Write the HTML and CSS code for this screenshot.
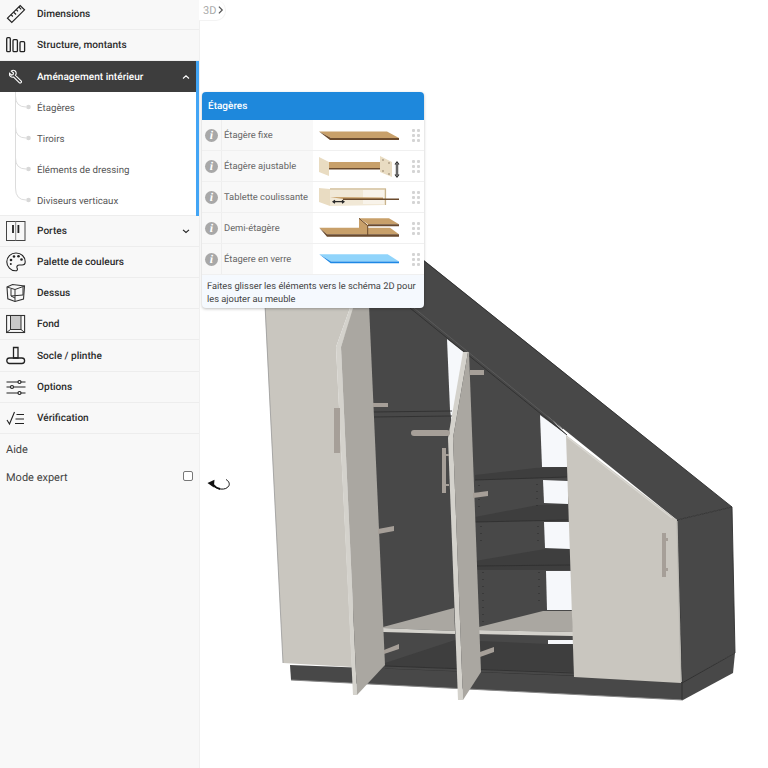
FILE: index.html
```html
<!DOCTYPE html>
<html lang="fr">
<head>
<meta charset="utf-8">
<title>Aménagement intérieur</title>
<link rel="stylesheet" href="styles.css">
</head>
<body>
<div class="app">
  <nav class="sidebar">
    <a class="row row-first"><svg class="ico" viewBox="0 0 20 20"><g fill="none" stroke="#222" stroke-width="1.2"><path d="M1.5 14.2 14.2 1.500 18.500 5.800 5.800 18.500Z"/><path d="M5 10.700l1.800 1.800M7.600 8.100l2.400 2.400M10.200 5.500l1.800 1.800M12.800 2.900l2.400 2.400"/></g></svg><span class="label">Dimensions</span></a>
    <a class="row"><svg class="ico" viewBox="0 0 20 20"><g fill="none" stroke="#222" stroke-width="1.300"><rect x="0.700" y="2.700" width="3.600" height="14" rx="1"/><rect x="7" y="4.700" width="4.400" height="12" rx="1"/><rect x="14" y="6.700" width="4.600" height="10" rx="1"/></g></svg><span class="label">Structure, montants</span></a>
    <div class="section">
      <a class="row row-active"><svg class="ico ico-wrench" viewBox="0 0 20 20"><path d="M7.800 2.300A4.200 4.200 0 0 0 3 2.800l3 2.600-.6 2-2.100.6-2.600-2.400a4.300 4.300 0 0 0 5.500 5.200l7.400 7.400a1.700 1.700 0 0 0 2.500-2.500L8.600 8.400A4.200 4.200 0 0 0 7.800 2.300Z" fill="none" stroke="#fff" stroke-width="1.500"/></svg><span class="label">Aménagement intérieur</span><svg class="chev" viewBox="0 0 8 8"><path d="M1 5.500 4 2.800l3 2.700" fill="none" stroke="#fff" stroke-width="1.100"/></svg></a>
      <div class="subnav">
        <svg class="tree" viewBox="0 0 32 124"><g fill="none" stroke="#dcdcdc"><path d="M15.500 0V96Q15.500 108 26 108M15.500 4Q15.500 15 26 15M15.500 35Q15.500 46 26 46M15.500 66Q15.500 77 26 77"/></g><g fill="#d8d8d8"><circle cx="28.500" cy="15" r="2.300"/><circle cx="28.500" cy="46" r="2.300"/><circle cx="28.500" cy="77" r="2.300"/><circle cx="28.500" cy="108" r="2.300"/></g></svg>
        <a class="sub">Étagères</a>
        <a class="sub">Tiroirs</a>
        <a class="sub">Éléments de dressing</a>
        <a class="sub">Diviseurs verticaux</a>
      </div>
    </div>
    <a class="row"><svg class="ico" viewBox="0 0 20 20"><g fill="none" stroke="#222"><rect x="0.500" y="0.500" width="18.500" height="19" stroke="#444"/><path d="M9.700.5v19" stroke="#888"/><path d="M7 4v8M12.400 4v8" stroke-width="1.800"/></g></svg><span class="label">Portes</span><svg class="chev" viewBox="0 0 8 8"><path d="M1 2.800 4 5.500l3-2.700" fill="none" stroke="#222" stroke-width="1.100"/></svg></a>
    <a class="row"><svg class="ico" viewBox="0 0 20 20"><path d="M10 1C4.800 1 .8 4.800.8 9.800c0 4.800 4 9 8.600 9 2 0 2.400-1.400 1.700-2.800-.7-1.600.4-3 2.100-3h2.800c2 0 3.200-1.400 3.200-3.300C19.200 4.800 15.200 1 10 1Z" fill="none" stroke="#222" stroke-width="1.100"/><g fill="#222"><circle cx="5" cy="8" r="1.300"/><circle cx="8" cy="4.500" r="1.300"/><circle cx="12.500" cy="4.300" r="1.300"/><circle cx="15.500" cy="7.500" r="1.300"/><circle cx="4.800" cy="12" r="1"/></g></svg><span class="label">Palette de couleurs</span></a>
    <a class="row"><svg class="ico" viewBox="0 0 20 20"><g fill="none" stroke="#333"><path d="M1 4 6.500 1.500 18.500 3 17.500 16 9 18.500 1.800 15.800Z" stroke-width="1.100"/><path d="M1 4 9 6.500 18.500 3M9 6.500V18.500M5 6v7l4 2M5 13l12-1V4"/></g></svg><span class="label">Dessus</span></a>
    <a class="row"><svg class="ico" viewBox="0 0 20 20"><g fill="none" stroke="#333"><rect x="0.600" y="1.500" width="18" height="17" stroke-width="1.100"/><rect x="4.500" y="1.500" width="10.500" height="14" fill="#c8c8c8"/><path d="M.6 18.500 4.500 15.500M18.600 18.500 15 15.500"/></g></svg><span class="label">Fond</span></a>
    <a class="row row-tall"><svg class="ico" viewBox="0 0 20 20"><g fill="none" stroke="#222" stroke-width="1.300"><path d="M7.500 1.500h4.500v10.500H7.500Z"/><rect x="0.800" y="12" width="17.800" height="5.500" rx="2.700"/></g></svg><span class="label">Socle / plinthe</span></a>
    <a class="row"><svg class="ico" viewBox="0 0 20 20"><g fill="none" stroke="#222" stroke-width="1.200"><path d="M.5 5h11.500M15 5h4.500M.5 10h4M8 10h11.500M.5 16h11.500M15 16h4.500"/><circle cx="13.500" cy="5" r="1.500"/><circle cx="6" cy="10" r="1.500"/><circle cx="13.500" cy="16" r="1.500"/></g></svg><span class="label">Options</span></a>
    <a class="row"><svg class="ico" viewBox="0 0 20 20"><g fill="none" stroke="#222" stroke-width="1.100"><path d="M1 12 3.500 16 8.500 4"/><path d="M10.500 6.500H18M9.500 11H18M9 15.500H18"/></g></svg><span class="label">Vérification</span></a>
    <div class="plain plain-help">Aide</div>
    <div class="plain plain-expert"><span>Mode expert</span><span class="check"></span></div>
  </nav>

  <main class="stage">
    <svg class="scene" viewBox="199 0 569 768">
      <polygon class="f-dark" points="360,290 420,290 567,435 575,680 370,684 352,668"/>
      <polygon class="f-gap" points="447,339 466,354 452,425 450,410"/>
      <polygon class="f-gap" points="540,415 567,435 567,467 542,467"/>
      <polygon class="f-gap" points="543,480 568,481 568,504 544,503"/>
      <polygon class="f-gap" points="544,522 570,522 570,549 545,548"/>
      <polygon class="f-gap" points="546,571 572,571 572,610 547,610"/>
      <polygon class="f-gap" points="548,640 574,640 574,644 548,644"/>
      <polygon class="f-shade" points="475,475 535,468 567,467 567,477 475,480"/>
      <polygon class="f-shade" points="475,517 538,505 568,504 568,520 475,522"/>
      <polygon class="f-shade" points="475,561 545,549 570,549 570,570 475,570"/>
      <polygon class="f-shade" points="385,663 455,640 548,644 574,644 574,672 385,666"/>
      <path class="f-line" d="M373 412 452 411M373 417 452 416M475 480 567 477M475 522 568 520M475 566 570 565M385 666 574 673M385 669 574 676"/>
      <path class="f-peg" d="M479 485V508M537 484V506M481 526V545M538 526V545M483 572V622M539 572V604"/>
      <polygon class="f-door-open" points="383,627 454,608 455,631 383,628"/>
      <polygon class="f-door-open" points="475,628 543,611 572,611 573,632 475,630"/>
      <polygon class="f-strip" points="383,628 455,631 455,634 383,632"/>
      <polygon class="f-strip" points="475,630 573,632 573,636 475,634"/>
      <polygon class="f-dark" points="290,665 574,676 683,682 683,700 291,680"/>
      <path class="f-edge" d="M291 680 683 700"/>
      <polygon class="f-dark" points="400,241 732,507 677,520 400,298"/>
      <path class="f-line" d="M410 308 567 435M423 260 732 507"/>
      <path class="f-fine" d="M414 308 563 429"/>
      <polygon class="f-dark" points="677,520 732,507 735,653 682,683"/>
      <polygon class="f-dark" points="682,682 735,653 733,673 683,700"/>
      <path class="f-line" d="M677 520 732 507 735 653 682 683 677 520M682 683V700"/>
      <polygon class="f-front" points="264,290 345,290 350,308 336,347 352,667 283,663"/>
      <path class="f-fine-light" d="M265 305 283 663"/>
      <polygon class="f-strip" points="336,347 341,347 357,695 353,695"/>
      <polygon class="f-strip" points="336,347 350,308 354,308 341,347"/>
      <polygon class="f-door-open" points="341,347 354,305 369,305 385,665 357,695"/>
      <polygon class="f-strip" points="448,438 453,438 463,700 458,700"/>
      <polygon class="f-strip" points="448,438 463,352 468,352 453,438"/>
      <polygon class="f-door-open" points="453,438 468,352 469,352 481,672 463,700"/>
      <polygon class="f-front" points="566,435 677,520 681,683 574,677"/>
      <path class="f-light" d="M567 437 672 518"/>
      <path class="f-strip-line" d="M677 521 681 682"/>
      <g class="f-handle">
        <rect x="334" y="408" width="6" height="45"/>
        <polygon points="373,403 388,403 388,407 373,407"/>
        <polygon points="378,529 394,526 394,531 378,534"/>
        <polygon points="384,650 399,644 399,649 384,654"/>
        <rect x="411" y="430" width="39" height="6" rx="3"/>
        <rect x="442" y="448" width="4" height="45"/>
        <rect x="446" y="454" width="3" height="2"/>
        <rect x="446" y="484" width="3" height="2"/>
        <polygon points="470,370 484,370 484,375 470,375"/>
        <polygon points="473,493 488,491 488,496 473,498"/>
        <polygon points="480,652 494,647 494,652 480,657"/>
        <rect x="662" y="533" width="4" height="44"/>
        <rect x="666" y="538" width="2" height="3"/>
        <rect x="666" y="568" width="2" height="3"/>
      </g>
    </svg>

    <div class="chip"><span>3D</span><svg class="chip-arrow" viewBox="0 0 8 10"><path d="M2 1.500 5.500 5 2 8.500" fill="none" stroke="#555" stroke-width="1.300"/></svg></div>

    <svg class="rotate" viewBox="0 0 24 14"><path d="M6 7.500C9 11 19 13.500 22 7.500 23 5 21 2.500 19 1.500" fill="none" stroke="#111" stroke-width="1"/><path d="M6 6.500C8 9 10 10.300 13 11" fill="none" stroke="#111" stroke-width="1.800"/><path d="M.5 5 7.500 1.800 6.800 9.500Z" fill="#111"/></svg>

    <section class="panel">
      <header class="panel-head">Étagères</header>
      <div class="item">
        <span class="info">i</span><span class="item-name">Étagère fixe</span>
        <span class="thumb"><svg class="thumb-svg" viewBox="0 0 95 30"><polygon class="w-top" points="6,11.500 74,11.500 86,18 18,18"/><polygon class="w-edge" points="6,11.500 18,18 86,18 86,20 17,20"/></svg></span>
        <span class="grip"><i></i><i></i><i></i><i></i><i></i><i></i></span>
      </div>
      <div class="item">
        <span class="info">i</span><span class="item-name">Étagère ajustable</span>
        <span class="thumb"><svg class="thumb-svg" viewBox="0 0 95 30"><polygon class="w-pale" points="6,6 16,11 16,25 6,21"/><polygon class="w-top" points="16,11 67,11 78,17 16,17"/><polygon class="w-edge" points="16,17 78,17 78,18.500 16,18.500"/><polygon class="w-pale" points="67,5 79,11 79,26 67,21"/><g class="w-holes"><circle cx="70" cy="9" r=".8"/><circle cx="76" cy="12" r=".8"/><circle cx="70" cy="20" r=".8"/><circle cx="76" cy="23" r=".8"/></g><path class="w-shaft" d="M84 12.500V24.500"/><path class="w-arrow" d="M82 13.500l2-2.500 2 2.500M82 23.500l2 2.500 2-2.500"/></svg></span>
        <span class="grip"><i></i><i></i><i></i><i></i><i></i><i></i></span>
      </div>
      <div class="item">
        <span class="info">i</span><span class="item-name">Tablette coulissante</span>
        <span class="thumb"><svg class="thumb-svg" viewBox="0 0 95 30"><polygon class="w-pale3" points="17,6 73,6 73,23 17,24"/><rect class="w-pale4" x="50" y="8" width="21" height="14"/><path class="w-frame" d="M17 7H72.500V23"/><polygon class="w-pale" points="6,6 17,7 17,24 6,20"/><polygon class="w-top" points="17,15 70,15.500 70,17 30,17"/><polygon class="w-edge" points="30,16.500 86,16.500 86,18 30,18"/><path class="w-arrow" d="M20 19.700H31M22 18.200l-2 1.500 2 1.500M29 18.200l2 1.500-2 1.500"/></svg></span>
        <span class="grip"><i></i><i></i><i></i><i></i><i></i><i></i></span>
      </div>
      <div class="item">
        <span class="info">i</span><span class="item-name">Demi-étagère</span>
        <span class="thumb"><svg class="thumb-svg" viewBox="0 0 95 30"><polygon class="w-top" points="46,5.300 76,5.300 86,11.300 55,11.300"/><polygon class="w-edge" points="55,11.300 86,11.300 86,13.300 55,13.300"/><polygon class="w-top" points="46,5.300 55,12 55,21.300 14,21.300 6.300,14.700 46,14.700"/><polygon class="w-top" points="55,14.700 77,14.700 86,21.300 55,21.300"/><polygon class="w-edge" points="6.300,14.700 14,21.300 86,21.300 86,23.700 14,23.700"/><path class="w-crease" d="M46 5.300 54.700 12.700V22"/></svg></span>
        <span class="grip"><i></i><i></i><i></i><i></i><i></i><i></i></span>
      </div>
      <div class="item">
        <span class="info">i</span><span class="item-name">Étagere en verre</span>
        <span class="thumb"><svg class="thumb-svg" viewBox="0 0 95 30"><polygon class="g-top" points="6.300,10.300 74.700,10.300 86,17.500 18,17.500"/><polygon class="g-edge" points="6.300,10.300 18,17.500 86,17.500 86,19.300 17.700,19.300"/></svg></span>
        <span class="grip"><i></i><i></i><i></i><i></i><i></i><i></i></span>
      </div>
      <p class="panel-foot">Faites glisser les éléments vers le schéma 2D pour les ajouter au meuble</p>
    </section>
  </main>
</div>
</body>
</html>
```

FILE: styles.css
```css
* { box-sizing: border-box; }
html, body { margin: 0; padding: 0; background: #fff; }
body { font-family: Roboto, "Open Sans", sans-serif; color: #222; text-rendering: geometricPrecision; }

.app { display: flex; width: 768px; height: 768px; overflow: hidden; }

.sidebar {
  width: 200px;
  flex: none;
  background: #f8f8f8;
  border-right: 1px solid #f0f0f0;
  display: flex;
  flex-direction: column;
}

.row {
  display: flex;
  align-items: center;
  flex: none;
  height: 31px;
  padding: 0 9px 0 6px;
  font-size: 10.100px;
  font-weight: 500;
  color: #2b2b2b;
  border-bottom: 1px solid #ededed;
}
.row-first { margin-top: -1px; }
.row-tall { height: 32px; }
.ico { width: 20px; height: 20px; flex: none; margin-right: 11px; }
.ico-wrench { width: 15px; height: 15px; margin: 0 13.500px 0 2.500px; }
.label { flex: 1; white-space: nowrap; padding-top: 1px; }
.chev { width: 8px; height: 8px; flex: none; }

.section { border-right: 3px solid #42a5f5; background: #fff; flex: none; }
.row-active { background: #3d3d3d; color: #fff; border-bottom: 0; padding-right: 6px; }

.subnav { position: relative; height: 124px; border-bottom: 1px solid #ededed; }
.tree { position: absolute; left: 0; top: 0; width: 32px; height: 124px; }
.sub {
  display: flex;
  align-items: center;
  height: 31px;
  padding: 1px 0 0 37px;
  font-size: 9.700px;
  font-weight: 400;
  color: #555;
}

.plain { padding: 0 6px; font-size: 11px; color: #444; }
.plain-help { height: 29px; padding-top: 9px; }
.plain-expert {
  display: flex;
  justify-content: space-between;
  align-items: center;
  height: 28px;
}
.check {
  width: 10px;
  height: 10px;
  border: 1px solid #777;
  border-radius: 2px;
  background: #fff;
  margin-top: -3px;
}

.stage { position: relative; flex: 1; background: #fff; }
.scene { position: absolute; left: -1px; top: 0; width: 569px; height: 768px; }

.f-dark { fill: #484848; }
.f-shade { fill: #3e3e3e; }
.f-gap { fill: #f6f8fb; }
.f-front { fill: #c9c6bf; }
.f-door-open { fill: #aaa7a1; }
.f-strip { fill: #d4d2cc; }
.f-handle { fill: #a69f98; }
.f-line { fill: none; stroke: #303030; stroke-width: 0.900; }
.f-fine { fill: none; stroke: #5a5a5a; stroke-width: 1; }
.f-edge { fill: none; stroke: #888; stroke-width: 1; }
.f-peg { fill: none; stroke: #2b2b2b; stroke-width: 1; stroke-dasharray: 1 6; }
.f-light { fill: none; stroke: #dad8d2; stroke-width: 1.200; }
.f-fine-light { fill: none; stroke: #999; stroke-width: 0.800; }
.f-strip-line { fill: none; stroke: #b9b7b1; stroke-width: 1.200; }

.chip {
  position: absolute;
  left: -1px;
  top: 0;
  width: 27px;
  height: 21px;
  background: #fff;
  border: 1px solid #f3f3f3;
  border-left: 0;
  border-top: 0;
  border-radius: 0 10px 10px 0;
  display: flex;
  align-items: center;
  padding-left: 4px;
  font-size: 11px;
  color: #aaa;
}
.chip-arrow { width: 8px; height: 10px; margin-left: 1px; }

.rotate { position: absolute; left: 7px; top: 478px; width: 24px; height: 14px; }

.panel {
  position: absolute;
  left: 2px;
  top: 92px;
  width: 222px;
  height: 216px;
  background: #f5f9fe;
  border-radius: 4px;
  box-shadow: 0 1px 3px rgba(0, 0, 0, .25);
  overflow: hidden;
}
.panel-head {
  height: 28px;
  background: #1e88dc;
  color: #fff;
  font-size: 10px;
  font-weight: 500;
  display: flex;
  align-items: center;
  padding: 1px 0 0 6px;
}
.item {
  display: flex;
  align-items: center;
  height: 31px;
  background: #f8f8f8;
  border-bottom: 1px solid #f0f0f0;
}
.info {
  width: 20px;
  height: 30px;
  flex: none;
  border-right: 1px solid #eee;
  display: flex;
  align-items: center;
  justify-content: center;
  font-family: "Liberation Serif", serif;
  font-weight: 700;
  font-style: italic;
  font-size: 12px;
  color: #fff;
  position: relative;
  z-index: 0;
}
.info::before {
  content: "";
  position: absolute;
  z-index: -1;
  left: 3px;
  top: 8.500px;
  width: 13px;
  height: 13px;
  border-radius: 50%;
  background: #a8a8a8;
}
.item-name { width: 91px; flex: none; padding: 1px 0 0 2px; font-size: 9.400px; color: #666; white-space: nowrap; }
.thumb { width: 95px; height: 30px; flex: none; background: #fff; }
.thumb-svg { display: block; width: 95px; height: 30px; }
.grip {
  width: 16px;
  height: 30px;
  flex: none;
  background: #fff;
  display: grid;
  grid-template-columns: 3px 3px;
  grid-auto-rows: 3px;
  gap: 2px;
  justify-content: center;
  align-content: center;
}
.grip i { background: #d4d4d4; border-radius: 1px; }
.panel-foot {
  margin: 0;
  padding: 5px 5px 0 5px;
  font-size: 9.300px;
  line-height: 13px;
  color: #444;
}

.w-top { fill: #c8a06a; }
.w-edge { fill: #6a4a2d; }
.w-pale { fill: #e9dcc2; }
.w-pale3 { fill: #f1e8d6; }
.w-pale4 { fill: #f8f3ea; }
.w-frame { fill: none; stroke: #c9b48e; stroke-width: 1.200; }
.w-holes { fill: #8a7a60; }
.w-crease { fill: none; stroke: #6a4a2d; stroke-width: 1; }
.w-shaft { fill: none; stroke: #666; stroke-width: 2.500; }
.w-arrow { fill: none; stroke: #2a2a2a; stroke-width: 1.200; }
.g-top { fill: #90d4fb; }
.g-edge { fill: #1e88e5; }
```
